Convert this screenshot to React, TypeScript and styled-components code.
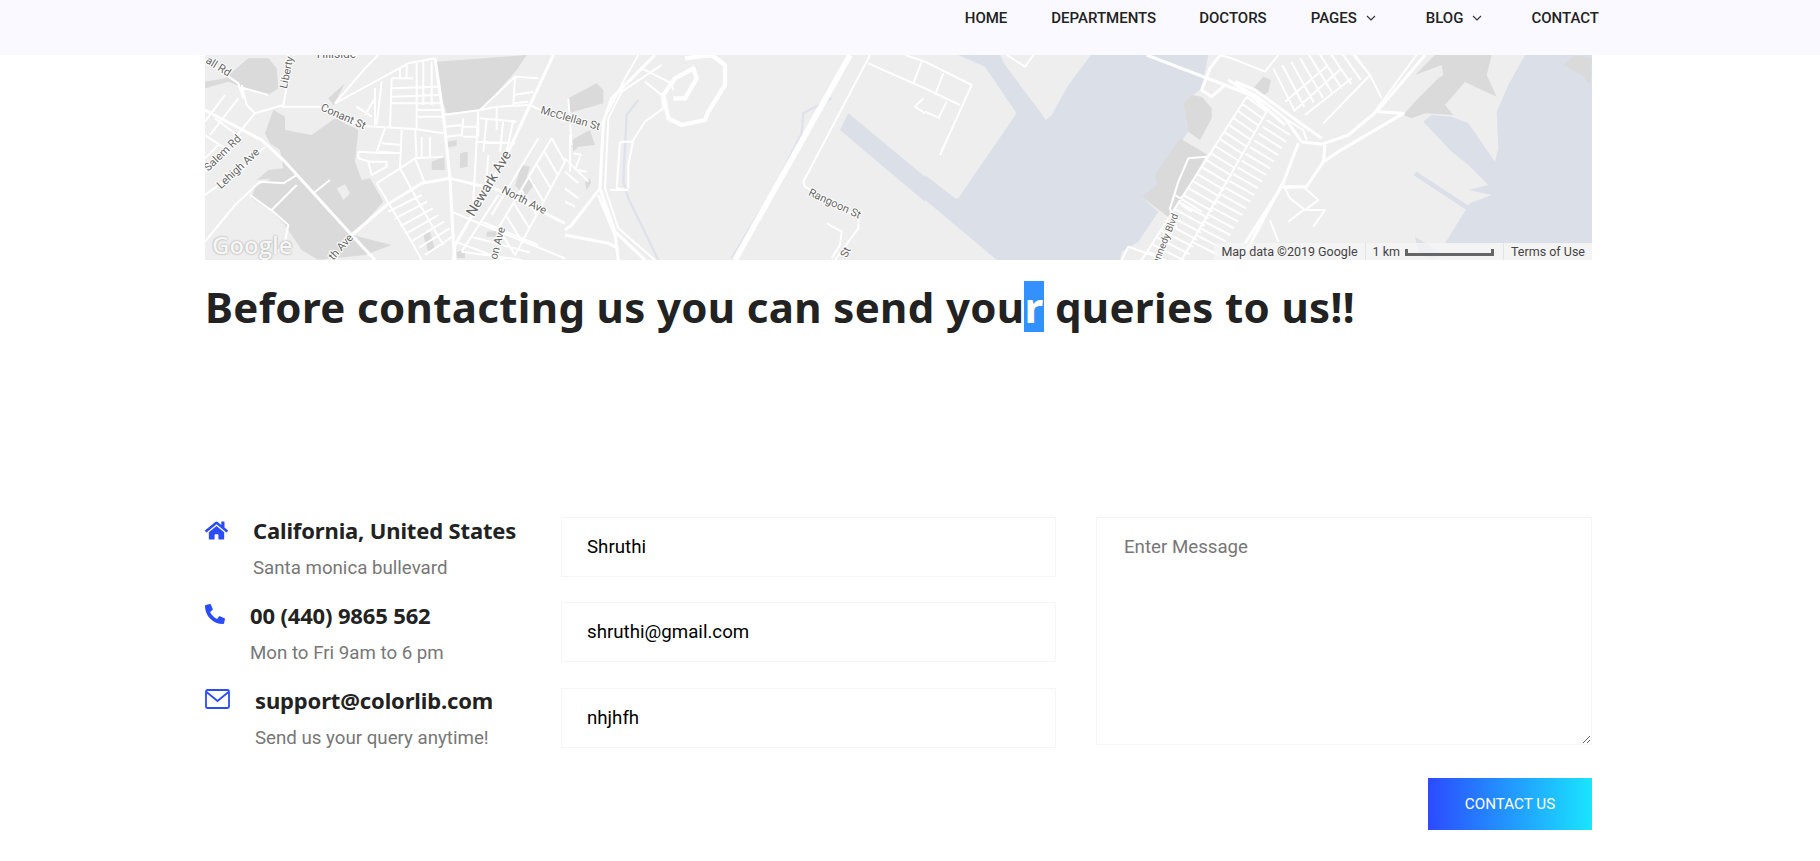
import React from 'react';
import styled, { createGlobalStyle } from 'styled-components';
import { FaHome, FaPhone } from 'react-icons/fa';

const GlobalStyle = createGlobalStyle`
  html, body {
    margin: 0;
    height: 861px;
    overflow: hidden;
    background: #fff;
    font-family: Roboto, sans-serif;
  }
`;

const Header = styled.header`
  height: 55px;
  background: #f9f9ff;
  display: flex;
  justify-content: flex-end;
  padding-right: 221px;
  box-sizing: border-box;
`;

const Nav = styled.nav`
  display: flex;
  height: 36px;
  align-items: center;
`;

const NavLink = styled.a<{ $gap: number }>`
  display: flex;
  align-items: center;
  margin-right: ${(p) => p.$gap}px;
  font-size: 15px;
  font-weight: 500;
  color: #222;
  text-transform: uppercase;
  svg {
    margin-left: 9px;
  }
`;

const Container = styled.main`
  margin: 0 228px 0 205px;
`;

const MapBox = styled.div`
  position: relative;
  height: 205px;
  overflow: hidden;
  background: #eeeeee;
  svg.map {
    display: block;
  }
`;

const GoogleMark = styled.span`
  position: absolute;
  left: 7px;
  bottom: 0;
  font-family: 'Open Sans', sans-serif;
  font-size: 24px;
  font-weight: 600;
  line-height: 30px;
  color: #f6f6f6;
  text-shadow: 0 0 2px #8a8a8a;
`;

const Attribution = styled.div`
  position: absolute;
  right: 0;
  bottom: 0;
  height: 17px;
  display: flex;
  align-items: center;
  font-size: 12.5px;
  color: #444;
  background: rgba(245, 245, 245, 0.75);
`;

const AttrCell = styled.span`
  display: flex;
  align-items: center;
  height: 100%;
  padding: 0 7px;
  border-right: 1px solid #e2e4ea;
  &:last-child {
    border-right: 0;
  }
`;

const ScaleBar = styled.i`
  display: block;
  width: 89px;
  height: 7px;
  margin: 1px 2px 0 5px;
  border: 3px solid #666;
  border-top: 0;
  box-sizing: border-box;
`;

const Title = styled.h2`
  margin: 21px 0 0;
  height: 51px;
  line-height: 51px;
  font-family: 'Noto Sans', sans-serif;
  font-size: 42px;
  font-weight: 700;
  letter-spacing: 0.35px;
  color: #222222;
  white-space: nowrap;
`;

const Picked = styled.span`
  display: inline-block;
  height: 51px;
  background: #3390ff;
  color: #fff;
`;

const ContactRow = styled.section`
  display: flex;
  margin-top: 185px;
`;

const InfoColumn = styled.div`
  width: 356px;
  flex: none;
`;

const InfoItem = styled.div`
  display: flex;
  height: 85px;
`;

const InfoIcon = styled.div<{ $width: number }>`
  width: ${(p) => p.$width}px;
  flex: none;
  padding-top: 2px;
  color: #2b4bff;
`;

const InfoTitle = styled.h3`
  margin: -1px 0 0;
  height: 28px;
  line-height: 28px;
  font-family: 'Noto Sans', sans-serif;
  font-size: 22px;
  font-weight: 700;
  letter-spacing: -0.15px;
  color: #222;
`;

const InfoText = styled.p`
  margin: 13px 0 0;
  font-size: 18.7px;
  line-height: 22px;
  color: #777777;
`;

const FieldColumn = styled.div`
  width: 495px;
  flex: none;
  display: flex;
  flex-direction: column;
  gap: 25px;
`;

const Field = styled.input`
  height: 60px;
  box-sizing: border-box;
  padding: 0 25px;
  border: 1px solid #f5f5f5;
  outline: 0;
  font-family: Roboto, sans-serif;
  font-size: 18.7px;
  color: #000;
  &:last-child {
    margin-top: 1px;
  }
`;

const MessageColumn = styled.div`
  flex: 1;
  margin-left: 40px;
`;

const Message = styled.textarea`
  display: block;
  width: 100%;
  height: 228px;
  box-sizing: border-box;
  padding: 18px 27px;
  border: 1px solid #f5f5f5;
  outline: 0;
  font-family: Roboto, sans-serif;
  font-size: 18.7px;
  &::placeholder {
    color: #777777;
    opacity: 1;
  }
`;

const ButtonRow = styled.div`
  display: flex;
  justify-content: flex-end;
  margin-top: 33px;
`;

const SubmitButton = styled.button`
  width: 164px;
  height: 52px;
  border: 0;
  background: linear-gradient(90deg, #2b4bff 0%, #19e5ff 100%);
  color: #fff;
  font-family: Roboto, sans-serif;
  font-size: 15.2px;
  font-weight: 400;
  text-transform: uppercase;
`;

type Pt = [number, number];

const Chevron = () => (
  <svg width="10" height="6" viewBox="0 0 10 6" fill="none" stroke="#333" strokeWidth="1.1">
    <path d="M1 1l4 4 4-4" />
  </svg>
);

const MailIcon = () => (
  <svg width="25" height="20" viewBox="0 0 25 20" fill="none" stroke="#2b4bff" strokeWidth="1.8">
    <rect x="1" y="1" width="23" height="18" rx="1.5" />
    <path d="M1.5 3l11 9 11-9" />
  </svg>
);

// rungs between two rails, in 3x crop coordinates
function rungs(a: Pt, b: Pt, c: Pt, d: Pt, n: number) {
  let out = '';
  for (let i = 0; i <= n; i++) {
    const t = i / n;
    const x1 = a[0] + (b[0] - a[0]) * t;
    const y1 = a[1] + (b[1] - a[1]) * t;
    const x2 = c[0] + (d[0] - c[0]) * t;
    const y2 = c[1] + (d[1] - c[1]) * t;
    out += `M${x1} ${y1}L${x2} ${y2}`;
  }
  return out;
}

const WATER = '#dadfe8';
const PARK = '#dadada';
const LAND = '#eeeeee';

// first crop, x 0-1080
const parksA = [
  'M695 20L965 0 935 45 830 165 725 175 700 100Z',
  'M205 165L240 185 240 225 320 240 390 190 460 225 450 320 470 375 495 370 535 440 445 540 480 550 560 570 480 600 340 615 290 585 240 510 195 465 140 430 150 395 200 370 155 375 190 345 235 340 225 285 195 265 180 235Z',
  'M0 80L60 70 130 10 190 10 215 40 220 100 190 120 110 95 70 80 0 100Z',
  'M370 130L420 85 385 150Z',
  'M680 320L718 305 720 345 680 345Z',
  'M725 260L755 255 755 272 725 278Z',
  'M765 295L788 290 788 335 765 340Z',
  'M930 390L950 330 975 335 965 365 990 385 960 425Z',
  'M845 530L875 528 875 545 845 545Z',
  'M655 540L675 530 690 585 670 590Z',
  'M755 590L780 585 780 610 755 610Z',
];

const thinA = [
  'M465 212L630 222 715 235M390 145L610 25 690 10M390 145L480 40 520 0',
  'M230 155L345 155 465 212M110 90L125 150 150 175 235 150 245 95 250 0',
  'M0 15L100 85 115 130M100 95L190 120',
  'M60 120L0 200M100 130L15 240M150 175L55 290M0 240L60 280M30 190L110 250',
  'M0 420L110 340 180 275M0 350L70 290M0 310L40 270',
  'M0 560L90 450 165 380 240 385M135 420L205 470 250 510 240 560 210 600M200 465L275 390M325 415L375 375M235 385L275 360',
  'M515 385L585 340 630 310 715 305M585 340L640 440 715 570M630 310L660 385',
  'M515 385L620 560 650 615',
  rungs([550, 470], [660, 600], [650, 420], [750, 540], 6),
  'M460 290L545 295M495 320L545 320 545 335 500 360 490 320M460 290L460 310 495 320M540 220L515 290M590 225L585 340M530 265L590 270M520 290L590 295',
  'M630 220L635 310M650 245L650 305M675 245L675 305',
  'M560 70L555 220M510 100L510 210M635 20L635 220M655 20L655 150M680 20L680 150',
  'M560 100L700 95M560 125L705 120M560 145L710 145M635 165L715 165M635 185L715 185',
  'M605 25L605 70M585 40L585 70M560 70L625 70M530 80L515 210M480 180L510 130M455 155L500 185',
  'M715 180L825 165 875 155 875 225M720 215L770 210M720 245L770 240M775 190L770 245M820 185L820 245M775 215L820 215M775 245L820 245',
  'M825 165L930 65 1000 70M930 65L925 150M925 120L985 110M925 145L970 140M975 150L1080 200M875 155L975 150',
  'M820 165L805 440M845 190L835 290M895 195L885 290M925 195L905 290M815 260L930 265M825 190L935 200M850 300L840 430',
  rungs([1040, 250], [880, 520], [1080, 320], [930, 600], 7),
  'M1040 250L880 520M1080 320L930 600M1000 250L860 480',
  'M880 420L770 590M740 470L810 500 1080 610M750 560L900 615',
  rungs([830, 500], [770, 590], [1000, 570], [950, 615], 2),
];

const wideA = [
  'M0 165L170 255 240 320 440 540 510 615',
  'M1045 0L910 290 820 450 750 570 745 615',
  'M690 10L715 180 735 370 745 560 750 615',
  'M440 540L545 450 650 385 735 370 880 405 1080 505',
];

// second crop, x 1080-2160
const parksB = [
  'M1090 130L1175 85 1195 105 1195 145 1090 175Z',
  'M1100 255L1155 225 1170 270 1120 275 1105 290Z',
  'M1140 380L1155 370 1158 385 1145 405Z',
];

const thinB = [
  'M1090 130L1100 270',
  'M1080 310L1150 380M1080 350L1120 385M1080 400L1120 430M1080 440L1110 455M1095 240L1095 350M1125 305L1110 345M1105 295L1130 300M1120 345L1145 350',
  'M1370 30L1250 110 1210 190 1200 400 1240 520 1350 615',
  'M1300 0L1260 70 1210 170',
  'M1320 80L1370 120 1375 160 1320 200 1285 255 1270 330 1270 400M1245 260L1285 260M1245 260L1235 400 1270 405M1215 405L1270 405',
  'M1310 40L1400 85 1405 105',
  'M1995 0L1795 380 1800 395 1960 490 1960 520 1890 615',
  'M1990 25L2160 100M2150 20L2125 85M2100 0L2160 20M2155 130L2130 155 2160 175',
  'M1865 505L1910 530 1905 570 1880 610',
];

const wideB = [
  'M1350 0L1220 130 1195 200 1185 400 1230 530 1320 615',
  'M1185 400L1100 510 1080 525',
  'M1180 420L1230 540 1240 615',
  'M1080 540L1210 565 1240 580',
];

// the ramp loop, drawn heavier than other roads
const ramp = 'M1440 10L1520 0 1560 30 1560 90 1510 170 1500 195 1430 210 1390 190 1375 120 1410 70 1465 40 1475 70 1440 130 1405 130';

// third crop, x 2160-3240
const landC = [
  'M2160 0L2260 0 2340 35 2435 175 2260 430 2250 430 2160 360Z',
  'M2160 435L2375 615 2160 615Z',
  'M2385 0L2658 0 2590 90 2540 180 2522 195 2505 170 2400 30Z',
];

const parksC = [
  'M2935 145L2960 120 2990 125 3020 160 3020 190 2985 255 2950 230Z',
  'M2925 250L3005 298 2960 380 2895 490 2810 425 2855 390 2850 360Z',
  'M3145 100L3175 65 3198 75 3190 110 3170 125Z',
];

const thinC = [
  'M2160 20L2300 90 2205 300M2160 100L2265 150M2160 170L2205 190M2215 55L2190 120M2225 140L2200 190',
  'M2405 0L2460 35 2485 0',
  'M3045 0L3080 10 3180 50 3220 0',
  'M3005 305L2950 310 2920 380 2895 460 2915 520M2910 420L2990 470M2930 450L2960 470',
  'M2750 615L2770 575 2880 615',
  rungs([3125, 125], [2830, 590], [3185, 170], [2930, 640], 22),
  rungs([3185, 195], [2960, 560], [3255, 240], [3040, 600], 18),
  'M3125 125L2810 615M3185 170L2930 615',
];

const wideC = [
  'M2825 0L3060 90 3160 130',
  'M3060 90L3020 125 2990 105 3015 40 3045 0',
  'M3070 75L3120 105 3240 210',
  'M3235 380L3110 615',
];

// fourth crop, x 3090-4161
const waterD = 'M3960 0L4161 0 4161 565 3720 565 3795 445 3860 420 3790 405 3850 390 3790 330 3740 290 3655 200 3680 180 3740 185 3790 205 3870 320 3880 280 3875 170 3910 90Z';

const parksD = [
  'M3690 0L3860 0 3845 60 3875 125 3810 95 3780 80 3720 150 3745 180 3660 175 3620 190 3595 180 3630 140 3700 70 3715 60 3710 30 3630 60Z',
  'M4075 30L4110 0 4161 10 4155 90 4130 60Z',
];

const thinD = [
  'M3635 0L3510 170',
  'M3355 205L3495 60 3445 0',
  rungs([3205, 40], [3420, -40], [3270, 170], [3495, 60], 8),
  'M3240 140L3370 30M3270 165L3410 40M3300 180L3440 70M3495 60L3530 130',
  'M3240 400L3295 395 3340 435 3300 465 3255 430ZM3250 500L3295 465 3360 465 3325 515M3195 495L3220 560',
  'M3240 190L3295 225 3305 255',
];

const wideD = [
  'M3090 90L3150 120 3240 190 3290 260 3350 268 3430 240 3520 165 3660 0',
  'M3090 80L3150 105 3280 200 3350 250',
  'M3520 170L3595 175 3400 290',
  'M3400 290L3355 320 3305 395 3230 395',
  'M3360 270L3355 320',
  'M3280 265L3230 395 3120 565',
];

const labels: [string, number, number, number, number, ('start' | 'end')?][] = [
  ['Hillside', 335, 8, 0, 36],
  ['Liberty Ave', 245, 102, -78, 32],
  ['Conant St', 345, 165, 24, 33],
  ['McClellan St', 1005, 175, 16, 33],
  ['Newark Ave', 806, 487, -59, 42],
  ['North Ave', 888, 412, 27, 33],
  ['Salem Rd', 10, 350, -44, 33],
  ['Lehigh Ave', 48, 403, -43, 33],
  ['Rangoon St', 1808, 420, 25, 33],
  ['on Ave', 875, 615, -75, 33],
  ['th Ave', 385, 617, -48, 33],
  ['St', 1925, 610, -65, 33],
  ['all Rd', 0, 22, 32, 33],
  ['Kennedy Blvd', 2920, 480, -68, 30, 'end'],
];

const roadProps = { fill: 'none', stroke: '#fff', strokeLinejoin: 'round' as const };

const MapSketch = () => (
  <svg className="map" width="1387" height="205" viewBox="0 0 4161 615">
    <rect width="4161" height="615" fill={LAND} />
    <path
      d="M2260 0L3010 0 2990 100 2935 145 2950 230 2855 360 2860 390 2810 425 2860 470 2800 560 2750 590 2745 615H2375L2160 435V360Z"
      fill={WATER}
    />
    {landC.map((d) => (
      <path key={d} d={d} fill={LAND} />
    ))}
    <path d="M1930 175L2160 365V440L1905 225Z" fill={WATER} />
    <path d={waterD} fill={WATER} />
    <path d="M3630 545L3720 600 3680 615 3640 590Z" fill={WATER} />
    <path d="M3630 355L3790 460 3810 445" fill="none" stroke={WATER} strokeWidth="14" />
    {[...parksA, ...parksB, ...parksC, ...parksD].map((d) => (
      <path key={d} d={d} fill={PARK} />
    ))}
    <path d="M395 400L420 388 435 415 415 435Z" fill={LAND} />
    <path
      d="M1300 135L1265 180 1255 380 1270 430 1360 615M1880 130L1795 175 1790 235 1700 410 1580 610"
      fill="none"
      stroke="#dfe2ea"
      strokeWidth="7"
    />
    <path d={[...thinA, ...thinB, ...thinC, ...thinD].join('')} {...roadProps} strokeWidth="6" />
    <path d={[...wideA, ...wideB, ...wideC, ...wideD].join('')} {...roadProps} strokeWidth="9" />
    <path d={ramp} {...roadProps} strokeWidth="13" />
    <path d="M1935 0L1590 615" {...roadProps} strokeWidth="17" />
    {labels.map(([text, x, y, angle, size, anchor]) => (
      <text
        key={text}
        transform={`translate(${x} ${y}) rotate(${angle})`}
        textAnchor={anchor || 'start'}
        fontFamily="Roboto, sans-serif"
        fontSize={size}
        fill="#666"
        stroke="#fff"
        strokeWidth="6"
        paintOrder="stroke"
      >
        {text}
      </text>
    ))}
  </svg>
);

export default function App() {
  return (
    <>
      <GlobalStyle />
      <Header>
        <Nav>
          <NavLink $gap={44}>Home</NavLink>
          <NavLink $gap={43}>Departments</NavLink>
          <NavLink $gap={44}>Doctors</NavLink>
          <NavLink $gap={50}>
            Pages
            <Chevron />
          </NavLink>
          <NavLink $gap={49}>
            Blog
            <Chevron />
          </NavLink>
          <NavLink $gap={0}>Contact</NavLink>
        </Nav>
      </Header>
      <Container>
        <MapBox>
          <MapSketch />
          <GoogleMark>Google</GoogleMark>
          <Attribution>
            <AttrCell>Map data ©2019 Google</AttrCell>
            <AttrCell>
              1 km
              <ScaleBar />
            </AttrCell>
            <AttrCell>Terms of Use</AttrCell>
          </Attribution>
        </MapBox>
        <Title>
          Before contacting us you can send you<Picked>r</Picked> queries to us!!
        </Title>
        <ContactRow>
          <InfoColumn>
            <InfoItem>
              <InfoIcon $width={48}>
                <FaHome size={23} />
              </InfoIcon>
              <div>
                <InfoTitle>California, United States</InfoTitle>
                <InfoText>Santa monica bullevard</InfoText>
              </div>
            </InfoItem>
            <InfoItem>
              <InfoIcon $width={45}>
                <FaPhone size={20} style={{ transform: 'scaleX(-1)' }} />
              </InfoIcon>
              <div>
                <InfoTitle>00 (440) 9865 562</InfoTitle>
                <InfoText>Mon to Fri 9am to 6 pm</InfoText>
              </div>
            </InfoItem>
            <InfoItem>
              <InfoIcon $width={50}>
                <MailIcon />
              </InfoIcon>
              <div>
                <InfoTitle>support@colorlib.com</InfoTitle>
                <InfoText>Send us your query anytime!</InfoText>
              </div>
            </InfoItem>
          </InfoColumn>
          <FieldColumn>
            <Field defaultValue="Shruthi" />
            <Field defaultValue="shruthi@gmail.com" />
            <Field defaultValue="nhjhfh" />
          </FieldColumn>
          <MessageColumn>
            <Message placeholder="Enter Message" />
            <ButtonRow>
              <SubmitButton>Contact Us</SubmitButton>
            </ButtonRow>
          </MessageColumn>
        </ContactRow>
      </Container>
    </>
  );
}
